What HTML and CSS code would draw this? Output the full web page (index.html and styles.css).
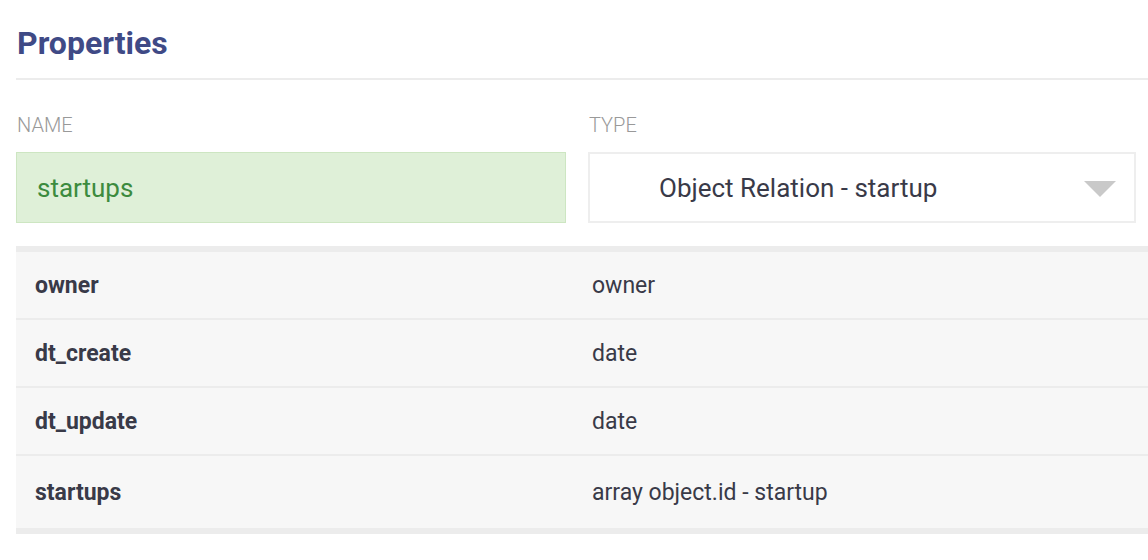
FILE: index.html
```html
<!DOCTYPE html>
<html lang="en">
<head>
<meta charset="utf-8">
<title>Properties</title>
<link rel="stylesheet" href="styles.css">
</head>
<body>
<div class="page">
  <h1 class="title">Properties</h1>
  <div class="form-row">
    <div class="field">
      <label class="label">NAME</label>
      <div class="input">startups</div>
    </div>
    <div class="field">
      <label class="label">TYPE</label>
      <div class="select">
        <span class="select-text">Object Relation - startup</span>
        <svg class="arrow" width="32" height="16" viewBox="0 0 32 16"><polygon points="0,0 32,0 16,16" fill="#c9c9c9"/></svg>
      </div>
    </div>
  </div>
  <div class="table">
    <div class="row"><div class="cell name">owner</div><div class="cell value">owner</div></div>
    <div class="row"><div class="cell name">dt_create</div><div class="cell value">date</div></div>
    <div class="row"><div class="cell name">dt_update</div><div class="cell value">date</div></div>
    <div class="row last"><div class="cell name">startups</div><div class="cell value">array object.id - startup</div></div>
  </div>
</div>
</body>
</html>
```
FILE: styles.css
```css
html, body {
  margin: 0;
  padding: 0;
  background: #ffffff;
}
body {
  font-family: Roboto, "Liberation Sans", Arial, sans-serif;
  color: #393a48;
}
.page {
  margin-left: 16px;
  padding-top: 24px;
}
.title {
  margin: 0;
  font-size: 32px;
  line-height: 38px;
  font-weight: 700;
  color: #3f4a86;
  padding-left: 1px;
  padding-bottom: 16px;
  border-bottom: 2px solid #ececec;
}
.form-row {
  display: grid;
  grid-template-columns: 550px 548px;
  column-gap: 22px;
  padding-top: 33px;
}
.field {
  display: flex;
  flex-direction: column;
}
.label {
  font-size: 20px;
  line-height: 24px;
  font-weight: 300;
  color: #999999;
  padding-left: 1px;
  margin-bottom: 15px;
}
.input {
  box-sizing: border-box;
  height: 71px;
  background: #dff0d8;
  border: 1px solid #cde6c2;
  color: #3c8b3e;
  font-size: 26px;
  display: flex;
  align-items: center;
  padding-left: 20px;
}
.select {
  box-sizing: border-box;
  height: 71px;
  background: #ffffff;
  border: 2px solid #eeeeee;
  display: flex;
  align-items: center;
  justify-content: space-between;
  padding-left: 69px;
  padding-right: 18px;
  font-size: 26px;
  color: #393a48;
}
.arrow {
  display: block;
  margin-top: 2px;
}
.table {
  margin-top: 23px;
  border-top: 6px solid #ececec;
  border-bottom: 6px solid #ececec;
  background: #f7f7f7;
}
.row {
  display: grid;
  grid-template-columns: 557px 1fr;
  height: 66px;
  align-items: center;
  border-bottom: 2px solid #ececec;
}
.row.last {
  height: 72px;
  border-bottom: none;
}
.cell {
  padding-left: 19px;
  font-size: 23px;
}
.name {
  font-weight: 700;
}
.value {
  font-weight: 400;
}
```
